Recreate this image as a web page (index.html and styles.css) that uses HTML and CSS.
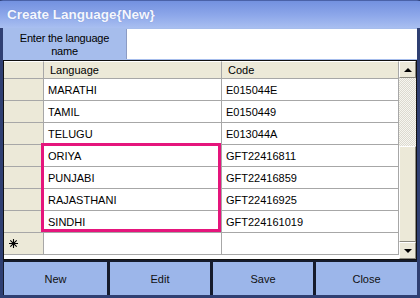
FILE: index.html
```html
<!DOCTYPE html>
<html lang="en">
<head>
  <meta charset="UTF-8">
  <title>Create Language{New}</title>
  <link rel="stylesheet" href="styles.css">
</head>
<body>
  <div class="window">
    <div class="titlebar">Create Language{New}</div>

    <div class="entry">
      <div class="entry-label">Enter the language<br>name</div>
      <input class="entry-input" type="text">
    </div>

    <div class="grid-box">
      <div class="grid">
        <div class="cell rowhead colhead"></div>
        <div class="cell colhead">Language</div>
        <div class="cell colhead">Code</div>

        <div class="cell rowhead"></div>
        <div class="cell">MARATHI</div>
        <div class="cell">E015044E</div>

        <div class="cell rowhead"></div>
        <div class="cell">TAMIL</div>
        <div class="cell">E0150449</div>

        <div class="cell rowhead"></div>
        <div class="cell">TELUGU</div>
        <div class="cell">E013044A</div>

        <div class="cell rowhead"></div>
        <div class="cell">ORIYA</div>
        <div class="cell">GFT22416811</div>

        <div class="cell rowhead"></div>
        <div class="cell">PUNJABI</div>
        <div class="cell">GFT22416859</div>

        <div class="cell rowhead"></div>
        <div class="cell">RAJASTHANI</div>
        <div class="cell">GFT22416925</div>

        <div class="cell rowhead"></div>
        <div class="cell">SINDHI</div>
        <div class="cell">GFT224161019</div>

        <div class="cell rowhead newrow">
          <svg width="9" height="9" viewBox="0 0 9 9">
            <path d="M4.5 0V9M0 4.5H9M1.3 1.3L7.7 7.7M7.7 1.3L1.3 7.7" stroke="#000" stroke-width="1.1"/>
          </svg>
        </div>
        <div class="cell"></div>
        <div class="cell"></div>
      </div>

      <div class="scrollbar">
        <div class="scroll-btn"><span class="arrow-up"></span></div>
        <div class="scroll-track"></div>
        <div class="scroll-thumb"></div>
        <div class="scroll-btn"><span class="arrow-down"></span></div>
      </div>

      <div class="highlight"></div>
    </div>

    <div class="buttons">
      <button class="btn">New</button>
      <button class="btn">Edit</button>
      <button class="btn">Save</button>
      <button class="btn">Close</button>
    </div>
  </div>
</body>
</html>
```

FILE: styles.css
```css
body {
  margin: 0;
  font-family: "Liberation Sans", Arial, sans-serif;
  font-size: 11px;
  color: #000;
}
.window {
  width: 420px;
  height: 298px;
  box-sizing: border-box;
  border: 3px solid #2f3f72;
  border-top: 1px solid #4a62a8;
  background: #a6bdec;
  display: flex;
  flex-direction: column;
}
.titlebar {
  height: 27px;
  margin: 0 -3px;
  padding-left: 7px;
  background: linear-gradient(#7391e0, #8ea8ea 55%, #a9bff0);
  color: #f4f7ff;
  font-weight: bold;
  font-size: 13.5px;
  line-height: 27px;
  text-shadow: 0 0 1px #6c84c8;
}
.entry {
  height: 32px;
  display: flex;
}
.entry-label {
  width: 123px;
  text-align: center;
  line-height: 13px;
  padding-top: 4px;
  box-sizing: border-box;
  letter-spacing: -0.2px;
}
.entry-input {
  flex: 1;
  margin: 1px 0 1px 0;
  border: none;
  border-left: 1px solid #8c9cc4;
  background: #fff;
  padding: 0;
}
.grid-box {
  position: relative;
  height: 198px;
  border: 1px solid #111;
  background: #fff;
  display: flex;
}
.grid {
  width: 395px;
  display: grid;
  grid-template-columns: 40px 178px 1fr;
  grid-template-rows: 18px;
  grid-auto-rows: 22px;
  align-content: start;
}
.cell {
  border-right: 1px solid #a7a7a7;
  border-bottom: 1px solid #a7a7a7;
  padding-left: 4px;
  display: flex;
  align-items: center;
  white-space: nowrap;
}
.rowhead {
  background: #ece9d8;
  padding-left: 0;
}
.colhead {
  background: #ece9d8;
  border-top: 1px solid #fff;
  padding-left: 6px;
}
.newrow {
  padding-left: 5px;
}
.scrollbar {
  flex: 1;
  display: flex;
  flex-direction: column;
}
.scroll-btn {
  height: 17px;
  box-sizing: border-box;
  background: #ece9d8;
  border: 1px solid;
  border-color: #fff #8c8a80 #8c8a80 #fff;
  display: flex;
  align-items: center;
  justify-content: center;
}
.arrow-up {
  border: 4px solid transparent;
  border-top: 0;
  border-bottom: 4px solid #000;
}
.arrow-down {
  border: 4px solid transparent;
  border-bottom: 0;
  border-top: 4px solid #000;
}
.scroll-track {
  height: 68px;
  background: repeating-conic-gradient(#f7f6f0 0 25%, #dcdad0 0 50%) 0 0 / 2px 2px;
}
.scroll-thumb {
  flex: 1;
  box-sizing: border-box;
  background: #ece9d8;
  border: 1px solid;
  border-color: #fff #8c8a80 #8c8a80 #fff;
}
.highlight {
  position: absolute;
  left: 37px;
  top: 82px;
  width: 174px;
  height: 83px;
  border: 3px solid #e5157c;
}
.buttons {
  flex: 1;
  display: grid;
  grid-template-columns: 103px 100px 100px 1fr;
  gap: 3px;
  background: #151b2c;
  padding: 2px 0 0 1px;
}
.btn {
  font: inherit;
  color: #111;
  background: #9cb6ea;
  border: none;
  padding: 0;
}
```
